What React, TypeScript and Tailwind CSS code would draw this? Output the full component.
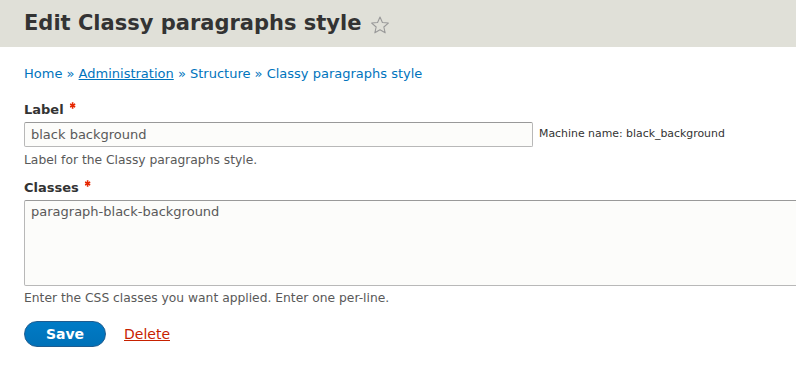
function Required() {
  return (
    <svg width="9" height="9" viewBox="0 0 32 32" className="ml-[4px] inline-block align-[4px]">
      <path
        d="M26.6 18.2l-6.4-2.2 6.4-2.2-2-5.7-6.3 2.9 1.4-6.9h-6.4l1.4 6.9-6.3-2.9-2 5.7 6.4 2.2-6.4 2.2 2 5.7 6.3-2.9-1.4 6.9h6.4l-1.4-6.9 6.3 2.9z"
        fill="#e62600"
      />
    </svg>
  );
}

export default function App() {
  return (
    <div className="min-h-[366px] w-[796px] overflow-hidden bg-white font-['DejaVu_Sans',sans-serif] text-[#333]">
      {/* Header */}
      <div className="flex h-[47px] items-center gap-[9px] bg-[#e0e0d8] px-6">
        <h1 className="text-[21px] font-bold leading-none text-[#333]">
          Edit Classy paragraphs style
        </h1>
        <svg width="20" height="20" viewBox="0 0 24 24" className="mt-[2px]">
          <path
            d="M12 2.5l2.9 6.6 7.1.6-5.4 4.7 1.6 7-6.2-3.7-6.2 3.7 1.6-7L2 9.7l7.1-.6z"
            fill="none"
            stroke="#999"
            strokeWidth="1.3"
            strokeLinejoin="round"
          />
        </svg>
      </div>

      <div className="pl-6">
        {/* Breadcrumb */}
        <nav className="mt-[18px] text-[13px] leading-[18px] text-[#0074bd]">
          Home » <span className="underline">Administration</span> » Structure » Classy paragraphs style
        </nav>

        {/* Label */}
        <div className="mt-[18px]">
          <label className="block text-[13px] font-bold leading-[18px] text-[#333]">
            Label<Required />
          </label>
          <div className="mt-[3px] flex items-center gap-[6px]">
            <div className="flex h-[25px] w-[509px] items-center rounded-[2px] border border-[#b8b8b8] border-t-[#999] bg-[#fcfcfa] px-[6px] text-[13px] text-[#595959]">
              black background
            </div>
            <span className="text-[10.9px] text-[#333]">Machine name: black_background</span>
          </div>
          <p className="mt-[5px] text-[12.3px] leading-[16px] text-[#595959]">
            Label for the Classy paragraphs style.
          </p>
        </div>

        {/* Classes */}
        <div className="mt-[11px]">
          <label className="block text-[13px] font-bold leading-[18px] text-[#333]">
            Classes<Required />
          </label>
          <div className="mt-[3px] h-[86px] w-[780px] rounded-[2px] border border-[#b8b8b8] border-t-[#999] bg-[#fcfcfa] px-[6px] pt-[2px] text-[13px] leading-[18px] text-[#595959]">
            paragraph-black-background
          </div>
          <p className="mt-[4px] text-[12.3px] leading-[16px] text-[#595959]">
            Enter the CSS classes you want applied. Enter one per-line.
          </p>
        </div>

        {/* Actions */}
        <div className="mt-[15px] flex items-center gap-[18px]">
          <button
            type="button"
            className="h-[26px] w-[82px] rounded-full border border-[#1e5c90] bg-gradient-to-b from-[#007bc6] to-[#0071b8] text-[14px] font-bold text-white"
          >
            Save
          </button>
          <a className="text-[14px] text-[#c72100] underline">Delete</a>
        </div>
      </div>
    </div>
  );
}
